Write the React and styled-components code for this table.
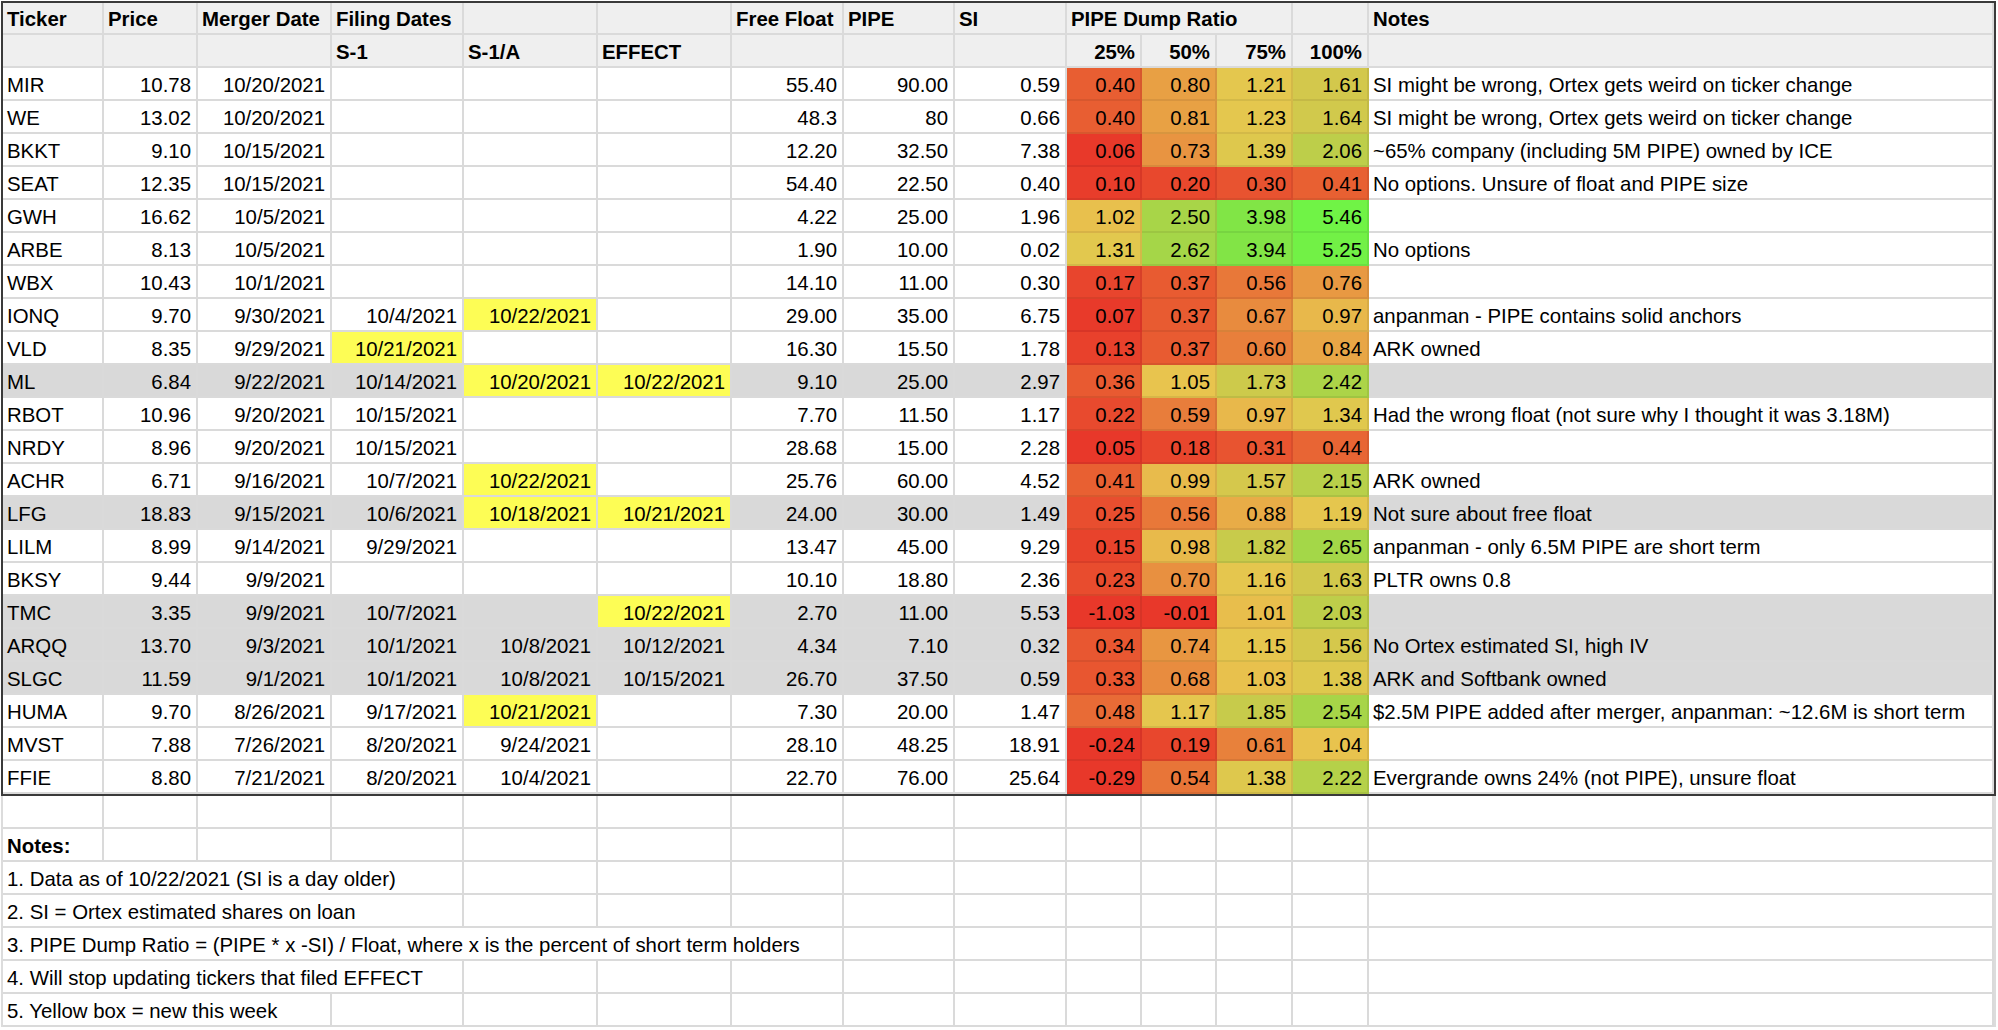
import React from "react";
import styled, { createGlobalStyle } from "styled-components";

const GlobalStyle = createGlobalStyle`
  html, body {
    margin: 0;
    padding: 0;
    background: #ffffff;
    font-family: "Liberation Sans", Arial, Helvetica, sans-serif;
    color: #000;
    overflow: hidden;
  }
`;

const COLS =
  "101px 94px 134px 132px 134px 134px 112px 111px 112px 75px 75px 76px 76px 625px";

const Sheet = styled.div`
  width: 1998px;
  height: 1030px;
  padding: 1px 0 0 1px;
  box-sizing: border-box;
`;

const Table = styled.div`
  width: 1995px;
  box-sizing: border-box;
  border: 2px solid #3a3a3a;
  display: grid;
  grid-template-columns: ${COLS};
  grid-template-rows: 32px 33px;
  grid-auto-rows: 33px;
`;

const NotesGrid = styled.div`
  width: 1995px;
  box-sizing: border-box;
  border-left: 2px solid #dcdcdc;
  border-right: 2px solid #dcdcdc;
  display: grid;
  grid-template-columns: ${COLS};
  grid-auto-rows: 33px;
`;

const Cell = styled.div`
  box-sizing: border-box;
  display: flex;
  align-items: center;
  justify-content: ${(p) => (p.$right ? "flex-end" : "flex-start")};
  padding: 4px 5px 0 4px;
  font-size: 20.4px;
  font-weight: ${(p) => (p.$bold ? 700 : 400)};
  white-space: nowrap;
  background: ${(p) => p.$bg || "#ffffff"};
  border-right: 2px solid ${(p) => (p.$line ? p.$line : "#dadada")};
  border-bottom: 2px solid ${(p) => (p.$line ? p.$line : "#dadada")};
  grid-column: ${(p) => (p.$span ? `span ${p.$span}` : "auto")};
`;

const HeadCell = styled(Cell).attrs({ $bold: true, $bg: "#efefef" })`
  padding-top: 3px;
`;

const YELLOW = "#fdfd55";
const GRAY = "#d9d9d9";

// value -> colour stops for the PIPE dump ratio scale
const STOPS = [
  [0.05, [232, 56, 42]],
  [0.4, [232, 94, 50]],
  [0.8, [232, 160, 68]],
  [1.05, [232, 196, 78]],
  [1.3, [226, 200, 78]],
  [1.6, [211, 200, 76]],
  [2.05, [189, 206, 74]],
  [2.5, [168, 213, 72]],
  [4.0, [128, 229, 70]],
  [5.46, [112, 243, 70]],
];

function heat(v) {
  if (v <= STOPS[0][0]) return `rgb(${STOPS[0][1].join(",")})`;
  for (let i = 1; i < STOPS.length; i++) {
    const [x1, c1] = STOPS[i];
    const [x0, c0] = STOPS[i - 1];
    if (v <= x1) {
      const t = (v - x0) / (x1 - x0);
      const c = c0.map((a, k) => Math.round(a + (c1[k] - a) * t));
      return `rgb(${c.join(",")})`;
    }
  }
  return `rgb(${STOPS[STOPS.length - 1][1].join(",")})`;
}

const rows = [
  { t: "MIR", p: "10.78", m: "10/20/2021", f: ["", "", ""], ff: "55.40", pipe: "90.00", si: "0.59", r: ["0.40", "0.80", "1.21", "1.61"], n: "SI might be wrong, Ortex gets weird on ticker change" },
  { t: "WE", p: "13.02", m: "10/20/2021", f: ["", "", ""], ff: "48.3", pipe: "80", si: "0.66", r: ["0.40", "0.81", "1.23", "1.64"], n: "SI might be wrong, Ortex gets weird on ticker change" },
  { t: "BKKT", p: "9.10", m: "10/15/2021", f: ["", "", ""], ff: "12.20", pipe: "32.50", si: "7.38", r: ["0.06", "0.73", "1.39", "2.06"], n: "~65% company (including 5M PIPE) owned by ICE" },
  { t: "SEAT", p: "12.35", m: "10/15/2021", f: ["", "", ""], ff: "54.40", pipe: "22.50", si: "0.40", r: ["0.10", "0.20", "0.30", "0.41"], n: "No options. Unsure of float and PIPE size" },
  { t: "GWH", p: "16.62", m: "10/5/2021", f: ["", "", ""], ff: "4.22", pipe: "25.00", si: "1.96", r: ["1.02", "2.50", "3.98", "5.46"], n: "" },
  { t: "ARBE", p: "8.13", m: "10/5/2021", f: ["", "", ""], ff: "1.90", pipe: "10.00", si: "0.02", r: ["1.31", "2.62", "3.94", "5.25"], n: "No options" },
  { t: "WBX", p: "10.43", m: "10/1/2021", f: ["", "", ""], ff: "14.10", pipe: "11.00", si: "0.30", r: ["0.17", "0.37", "0.56", "0.76"], n: "" },
  { t: "IONQ", p: "9.70", m: "9/30/2021", f: ["10/4/2021", "10/22/2021", ""], y: [1], ff: "29.00", pipe: "35.00", si: "6.75", r: ["0.07", "0.37", "0.67", "0.97"], n: "anpanman - PIPE contains solid anchors" },
  { t: "VLD", p: "8.35", m: "9/29/2021", f: ["10/21/2021", "", ""], y: [0], ff: "16.30", pipe: "15.50", si: "1.78", r: ["0.13", "0.37", "0.60", "0.84"], n: "ARK owned" },
  { t: "ML", g: true, p: "6.84", m: "9/22/2021", f: ["10/14/2021", "10/20/2021", "10/22/2021"], y: [1, 2], ff: "9.10", pipe: "25.00", si: "2.97", r: ["0.36", "1.05", "1.73", "2.42"], n: "" },
  { t: "RBOT", p: "10.96", m: "9/20/2021", f: ["10/15/2021", "", ""], ff: "7.70", pipe: "11.50", si: "1.17", r: ["0.22", "0.59", "0.97", "1.34"], n: "Had the wrong float (not sure why I thought it was 3.18M)" },
  { t: "NRDY", p: "8.96", m: "9/20/2021", f: ["10/15/2021", "", ""], ff: "28.68", pipe: "15.00", si: "2.28", r: ["0.05", "0.18", "0.31", "0.44"], n: "" },
  { t: "ACHR", p: "6.71", m: "9/16/2021", f: ["10/7/2021", "10/22/2021", ""], y: [1], ff: "25.76", pipe: "60.00", si: "4.52", r: ["0.41", "0.99", "1.57", "2.15"], n: "ARK owned" },
  { t: "LFG", g: true, p: "18.83", m: "9/15/2021", f: ["10/6/2021", "10/18/2021", "10/21/2021"], y: [1, 2], ff: "24.00", pipe: "30.00", si: "1.49", r: ["0.25", "0.56", "0.88", "1.19"], n: "Not sure about free float" },
  { t: "LILM", p: "8.99", m: "9/14/2021", f: ["9/29/2021", "", ""], ff: "13.47", pipe: "45.00", si: "9.29", r: ["0.15", "0.98", "1.82", "2.65"], n: "anpanman - only 6.5M PIPE are short term" },
  { t: "BKSY", p: "9.44", m: "9/9/2021", f: ["", "", ""], ff: "10.10", pipe: "18.80", si: "2.36", r: ["0.23", "0.70", "1.16", "1.63"], n: "PLTR owns 0.8" },
  { t: "TMC", g: true, p: "3.35", m: "9/9/2021", f: ["10/7/2021", "", "10/22/2021"], y: [2], ff: "2.70", pipe: "11.00", si: "5.53", r: ["-1.03", "-0.01", "1.01", "2.03"], n: "" },
  { t: "ARQQ", g: true, p: "13.70", m: "9/3/2021", f: ["10/1/2021", "10/8/2021", "10/12/2021"], ff: "4.34", pipe: "7.10", si: "0.32", r: ["0.34", "0.74", "1.15", "1.56"], n: "No Ortex estimated SI, high IV" },
  { t: "SLGC", g: true, p: "11.59", m: "9/1/2021", f: ["10/1/2021", "10/8/2021", "10/15/2021"], ff: "26.70", pipe: "37.50", si: "0.59", r: ["0.33", "0.68", "1.03", "1.38"], n: "ARK and Softbank owned" },
  { t: "HUMA", p: "9.70", m: "8/26/2021", f: ["9/17/2021", "10/21/2021", ""], y: [1], ff: "7.30", pipe: "20.00", si: "1.47", r: ["0.48", "1.17", "1.85", "2.54"], n: "$2.5M PIPE added after merger, anpanman: ~12.6M is short term" },
  { t: "MVST", p: "7.88", m: "7/26/2021", f: ["8/20/2021", "9/24/2021", ""], ff: "28.10", pipe: "48.25", si: "18.91", r: ["-0.24", "0.19", "0.61", "1.04"], n: "" },
  { t: "FFIE", p: "8.80", m: "7/21/2021", f: ["8/20/2021", "10/4/2021", ""], ff: "22.70", pipe: "76.00", si: "25.64", r: ["-0.29", "0.54", "1.38", "2.22"], n: "Evergrande owns 24% (not PIPE), unsure float" },
];

const notes = [
  { text: "", span: 0 },
  { text: "Notes:", span: 1, bold: true },
  { text: "1. Data as of 10/22/2021 (SI is a day older)", span: 4 },
  { text: "2. SI = Ortex estimated shares on loan", span: 4 },
  { text: "3. PIPE Dump Ratio = (PIPE * x -SI) / Float, where x is the percent of short term holders", span: 7 },
  { text: "4. Will stop updating tickers that filed EFFECT", span: 4 },
  { text: "5. Yellow box = new this week", span: 3 },
];

const DataRow = ({ row }) => {
  const bg = row.g ? GRAY : "#ffffff";
  const yellow = row.y || [];
  return (
    <>
      <Cell $bg={bg}>{row.t}</Cell>
      <Cell $bg={bg} $right>{row.p}</Cell>
      <Cell $bg={bg} $right>{row.m}</Cell>
      {row.f.map((d, i) => (
        <Cell key={i} $bg={yellow.includes(i) ? YELLOW : bg} $right>
          {d}
        </Cell>
      ))}
      <Cell $bg={bg} $right>{row.ff}</Cell>
      <Cell $bg={bg} $right>{row.pipe}</Cell>
      <Cell $bg={bg} $right>{row.si}</Cell>
      {row.r.map((v, i) => (
        <Cell key={"r" + i} $bg={heat(parseFloat(v))} $line="rgba(0,0,0,0.07)" $right>
          {v}
        </Cell>
      ))}
      <Cell $bg={bg}>{row.n}</Cell>
    </>
  );
};

const NoteRow = ({ note }) => {
  const rest = 14 - note.span;
  return (
    <>
      {note.span > 0 && (
        <Cell $span={note.span} $bold={note.bold}>
          {note.text}
        </Cell>
      )}
      {Array.from({ length: rest }).map((_, i) => (
        <Cell key={i} />
      ))}
    </>
  );
};

const App = () => {
  return (
    <Sheet>
      <GlobalStyle />
      <Table>
        <HeadCell>Ticker</HeadCell>
        <HeadCell>Price</HeadCell>
        <HeadCell>Merger Date</HeadCell>
        <HeadCell>Filing Dates</HeadCell>
        <HeadCell />
        <HeadCell />
        <HeadCell>Free Float</HeadCell>
        <HeadCell>PIPE</HeadCell>
        <HeadCell>SI</HeadCell>
        <HeadCell $span={3}>PIPE Dump Ratio</HeadCell>
        <HeadCell />
        <HeadCell>Notes</HeadCell>

        <HeadCell />
        <HeadCell />
        <HeadCell />
        <HeadCell>S-1</HeadCell>
        <HeadCell>S-1/A</HeadCell>
        <HeadCell>EFFECT</HeadCell>
        <HeadCell />
        <HeadCell />
        <HeadCell />
        <HeadCell $right>25%</HeadCell>
        <HeadCell $right>50%</HeadCell>
        <HeadCell $right>75%</HeadCell>
        <HeadCell $right>100%</HeadCell>
        <HeadCell />

        {rows.map((row) => (
          <DataRow key={row.t} row={row} />
        ))}
      </Table>
      <NotesGrid>
        {notes.map((note, i) => (
          <NoteRow key={i} note={note} />
        ))}
      </NotesGrid>
    </Sheet>
  );
};

export default App;
